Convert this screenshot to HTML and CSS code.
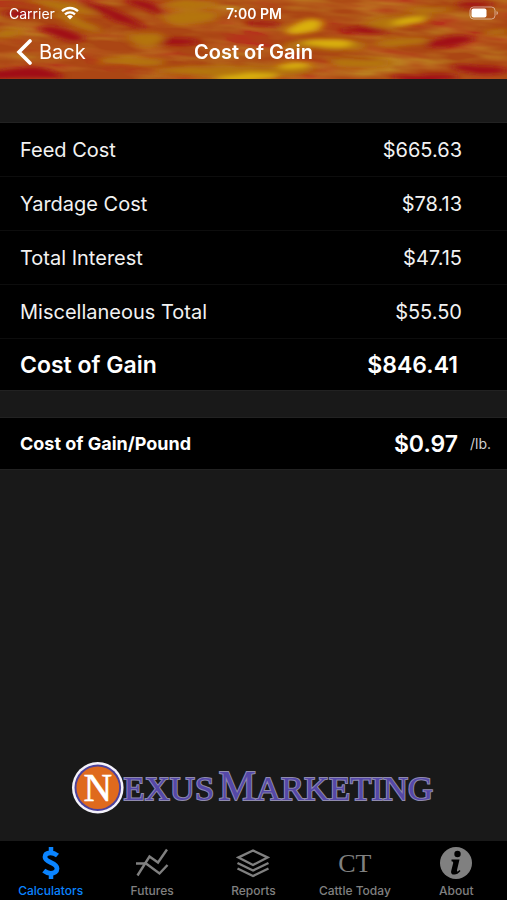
FILE: index.html
```html
<!DOCTYPE html>
<html lang="en">
<head>
    <meta charset="utf-8">
    <meta name="viewport" content="width=device-width, initial-scale=1">
    <title>Cost of Gain</title>
    <link rel="stylesheet" href="styles.css">
</head>
<body>
    <header class="top">
        <!-- sunset clouds -->
        <svg class="sky" viewBox="0 0 507 79" preserveAspectRatio="none" aria-hidden="true">
            <defs>
                <filter id="cloud" x="-20%" y="-60%" width="140%" height="220%">
                    <feTurbulence type="fractalNoise" baseFrequency="0.02 0.05" numOctaves="2" seed="4" result="n"/>
                    <feDisplacementMap in="SourceGraphic" in2="n" scale="9" xChannelSelector="R" yChannelSelector="G"/>
                    <feGaussianBlur stdDeviation="5 2"/>
                </filter>
                <filter id="grain" x="0" y="0" width="100%" height="100%">
                    <feTurbulence type="fractalNoise" baseFrequency="0.014 0.075" numOctaves="3" seed="9"/>
                    <feColorMatrix values="0 0 0 0 0.66  1.6 0 0 0 -0.45  0 0 0 0 0.03  0 2.4 0 0 -0.85"/>
                </filter>
            </defs>
            <rect width="507" height="79" fill="#ab4614"/>
            <rect x="-20" y="-50" width="560" height="160" filter="url(#grain)" transform="rotate(4)" opacity="0.4"/>
            <g filter="url(#cloud)">
                <g fill="#a01116">
                    <ellipse cx="62" cy="33" rx="24" ry="5" transform="rotate(12 62 33)"/>
                    <ellipse cx="112" cy="15" rx="36" ry="4" transform="rotate(22 112 15)"/>
                    <ellipse cx="145" cy="5" rx="22" ry="4" transform="rotate(20 145 5)"/>
                    <ellipse cx="20" cy="74" rx="44" ry="6"/>
                    <ellipse cx="20" cy="14" rx="16" ry="4"/>
                    <ellipse cx="175" cy="42" rx="24" ry="3"/>
                    <ellipse cx="262" cy="24" rx="18" ry="3"/>
                    <ellipse cx="450" cy="41" rx="28" ry="4" transform="rotate(-6 450 41)"/>
                    <ellipse cx="480" cy="69" rx="28" ry="5"/>
                    <ellipse cx="425" cy="77" rx="34" ry="4"/>
                    <ellipse cx="365" cy="31" rx="26" ry="3"/>
                    <ellipse cx="475" cy="4" rx="20" ry="3"/>
                </g>
                <g fill="#b4740f">
                    <ellipse cx="78" cy="22" rx="26" ry="4" transform="rotate(22 78 22)"/>
                    <ellipse cx="62" cy="7" rx="34" ry="4" transform="rotate(14 62 7)"/>
                    <ellipse cx="8" cy="34" rx="13" ry="4"/>
                    <ellipse cx="192" cy="17" rx="27" ry="7"/>
                    <ellipse cx="146" cy="39" rx="20" ry="6"/>
                    <ellipse cx="190" cy="4" rx="26" ry="4"/>
                    <ellipse cx="235" cy="71" rx="80" ry="6"/>
                    <ellipse cx="130" cy="62" rx="34" ry="4"/>
                    <ellipse cx="325" cy="45" rx="42" ry="6"/>
                    <ellipse cx="400" cy="21" rx="32" ry="6" transform="rotate(-10 400 21)"/>
                    <ellipse cx="402" cy="43" rx="26" ry="5" transform="rotate(-6 402 43)"/>
                    <ellipse cx="360" cy="63" rx="30" ry="5"/>
                    <ellipse cx="498" cy="32" rx="12" ry="3"/>
                    <ellipse cx="430" cy="9" rx="26" ry="3"/>
                </g>
                <g fill="#d9b00b">
                    <ellipse cx="306" cy="26" rx="18" ry="6" transform="rotate(-10 306 26)"/>
                    <ellipse cx="328" cy="43" rx="26" ry="4"/>
                    <ellipse cx="248" cy="77" rx="30" ry="4"/>
                    <ellipse cx="294" cy="65" rx="18" ry="3"/>
                    <ellipse cx="408" cy="21" rx="16" ry="3" transform="rotate(-10 408 21)"/>
                </g>
            </g>
        </svg>

        <div class="status">
            <span class="carrier">Carrier
                <svg width="18" height="14" viewBox="0 0 18 14" aria-hidden="true">
                    <g fill="none" stroke="#fff" stroke-width="2.3">
                        <path d="M1 5.2a11.6 11.6 0 0 1 16 0"/>
                        <path d="M4 8.4a7.3 7.3 0 0 1 10 0"/>
                    </g>
                    <path d="M9 13.6l-3-3.1a4.4 4.4 0 0 1 6 0z" fill="#fff"/>
                </svg>
            </span>
            <span class="clock">7:00 PM</span>
            <svg class="battery" width="30" height="14" viewBox="0 0 30 14" aria-hidden="true">
                <rect x="1" y="1" width="25" height="12" rx="3.5" fill="none" stroke="#fff" stroke-opacity="0.5"/>
                <rect x="2.5" y="2.500" width="15" height="9" rx="2" fill="#fff"/>
                <path d="M27.5 5v4q1.5-.5 1.5-2t-1.5-2z" fill="#fff" fill-opacity="0.5"/>
            </svg>
        </div>

        <nav class="bar">
            <a href="#" class="back">
                <svg width="16" height="26" viewBox="0 0 16 26" aria-hidden="true">
                    <path d="M14 2L3 13l11 11" fill="none" stroke="#fff" stroke-width="3.6" stroke-linecap="round" stroke-linejoin="miter"/>
                </svg>
                Back
            </a>
            <h1>Cost of Gain</h1>
        </nav>
    </header>

    <main>
        <table class="costs">
            <tr><th scope="row">Feed Cost</th><td>$665.63</td><td class="unit"></td></tr>
            <tr><th scope="row">Yardage Cost</th><td>$78.13</td><td class="unit"></td></tr>
            <tr><th scope="row">Total Interest</th><td>$47.15</td><td class="unit"></td></tr>
            <tr><th scope="row">Miscellaneous Total</th><td>$55.50</td><td class="unit"></td></tr>
            <tr class="total"><th scope="row">Cost of Gain</th><td>$846.41</td><td class="unit"></td></tr>
        </table>

        <table class="costs per-pound">
            <tr class="total"><th scope="row">Cost of Gain/Pound</th><td>$0.97</td><td class="unit">/lb.</td></tr>
        </table>

        <svg class="logo" viewBox="0 0 368 54" role="img" aria-label="Nexus Marketing">
            <circle cx="27" cy="27" r="26" fill="#f4f2fa"/>
            <circle cx="27" cy="27" r="23.5" fill="#4d429b"/>
            <circle cx="27" cy="27" r="21.5" fill="#df6a1d"/>
            <text class="initial" x="27" y="40" text-anchor="middle">N</text>
            <text class="word" x="53" y="39">EXUS</text>
            <text class="word" x="149" y="39"><tspan class="cap">M</tspan>ARKETING</text>
        </svg>
    </main>

    <nav class="tabs">
        <a href="#" class="active">
            <svg width="34" height="34" viewBox="0 0 34 34" aria-hidden="true">
                <path d="M17 1v6M17 27v6" fill="none" stroke="currentColor" stroke-width="4.500"/>
                <path d="M23.500 9.500C21 7.500 18.500 6.800 16.300 6.800c-3.500 0-5.300 1.700-5.300 4.300 0 6.200 12 4.600 12 11.500 0 2.900-2.500 4.800-6.300 4.800-2.700 0-4.700-.9-6.900-2.700" fill="none" stroke="currentColor" stroke-width="4.800"/>
            </svg>
            Calculators
        </a>
        <a href="#">
            <svg width="34" height="34" viewBox="0 0 34 34" aria-hidden="true">
                <g fill="none" stroke="currentColor" stroke-width="2.400">
                    <path d="M2.500 29.500L14.500 10.500l8.500 6L32 3.500"/>
                    <path d="M1 17.500h10l13.500 10L32.500 19"/>
                </g>
            </svg>
            Futures
        </a>
        <a href="#">
            <svg width="34" height="34" viewBox="0 0 34 34" aria-hidden="true">
                <g fill="none" stroke="currentColor" stroke-width="2.400">
                    <path d="M17 4.500L31.500 11.500 17 19 2.500 11.500z"/>
                    <path d="M1.500 17L17 24.500 32.500 17"/>
                    <path d="M1.500 22.500L17 30l15.500-7.500"/>
                </g>
            </svg>
            Reports
        </a>
        <a href="#">
            <span class="ct">CT</span>
            Cattle Today
        </a>
        <a href="#">
            <svg width="34" height="34" viewBox="0 0 34 34" aria-hidden="true">
                <circle cx="17" cy="17" r="16" fill="currentColor"/>
                <circle cx="18.500" cy="8" r="3.200" fill="#000"/>
                <path d="M12.500 13.500h8l-2.500 10.500q-.4 1.800.8 1.400l1.700-1.300 1 1c-2 2.500-4 3.500-6 3.500-3 0-3.800-1.800-3.200-4.200l1.900-7.400q.4-1.600-1.700-1.700z" fill="#000"/>
            </svg>
            About
        </a>
    </nav>
</body>
</html>
```

FILE: styles.css
```css
* { box-sizing: border-box }

body {
    display: flex;
    flex-direction: column;
    min-height: 100vh;
    margin: 0;
    background-color: #191919;
    color: #f2f2f2;
    font-family: Inter, "Liberation Sans", sans-serif;
}

a {
    color: inherit;
    text-decoration: none;
}

.top {
    position: relative;
    padding-bottom: 1px;
    color: white;
}

.sky {
    position: absolute;
    width: 100%;
    height: 100%;
}

.status, .bar {
    position: relative;
    display: grid;
    grid-template-columns: 1fr auto 1fr;
    align-items: center;
}

.status {
    height: 26px;
    padding: 0 8px 0 9px;
    font-size: 14px;
}

.carrier {
    display: flex;
    align-items: center;
    gap: 6px;
}

.clock { font-weight: 600 }

.battery { justify-self: end }

.bar {
    height: 52px;
    padding: 0 16px;
}

.back {
    display: flex;
    align-items: center;
    gap: 7px;
    font-size: 20px;
}

h1 {
    margin: 0;
    font-size: 20px;
    font-weight: 600;
}

main {
    display: flex;
    flex-direction: column;
    flex: 1;
    gap: 26px;
    padding-top: 43px;
}

.costs {
    width: 100%;
    border-collapse: separate;
    border-spacing: 0;
    border: solid #222;
    border-width: 1px 0;
    background-color: black;
    font-size: 20px;
}

.costs th, .costs td {
    height: 54px;
    padding: 0;
    border-bottom: 1px solid #0d0d0d;
}

.costs tr:last-child > * {
    height: 51px;
    border-bottom: 0;
}

.costs th {
    padding-left: 20px;
    font-weight: normal;
    text-align: left;
}

.costs td { text-align: right }

.costs .unit {
    width: 45px;
    padding-right: 16px;
    font-size: 14px;
    font-weight: normal;
}

.costs .total > * {
    color: white;
    font-size: 23px;
    font-weight: 600;
}

.costs .total td { padding-right: 4px }

.costs .total .unit {
    padding-right: 16px;
    color: #d0d0d0;
    font-size: 14px;
    font-weight: normal;
}

.costs.per-pound th {
    font-size: 18px;
    font-weight: 700;
}

.logo {
    width: 72%;
    margin: auto auto 26px;
}

.initial, .word { font-family: "Liberation Serif", serif }

.initial {
    fill: white;
    stroke: white;
    stroke-width: 0.5px;
    font-size: 40px;
}

.word {
    fill: #5548a8;
    stroke: #8f8aae;
    stroke-width: 2px;
    paint-order: stroke;
    font-size: 35px;
}

.cap { font-size: 42px }

.tabs {
    display: grid;
    grid-template-columns: repeat(5, 1fr);
    height: 59px;
    padding-top: 5px;
    background-color: black;
    color: #808080;
}

.tabs a {
    display: flex;
    flex-direction: column;
    align-items: center;
    gap: 3px;
    font-size: 12px;
    font-weight: 500;
    line-height: 16px;
}

.tabs .active { color: #0a84ff }

.ct {
    height: 34px;
    font-family: "Liberation Serif", serif;
    font-size: 26px;
    line-height: 36px;
}
```
